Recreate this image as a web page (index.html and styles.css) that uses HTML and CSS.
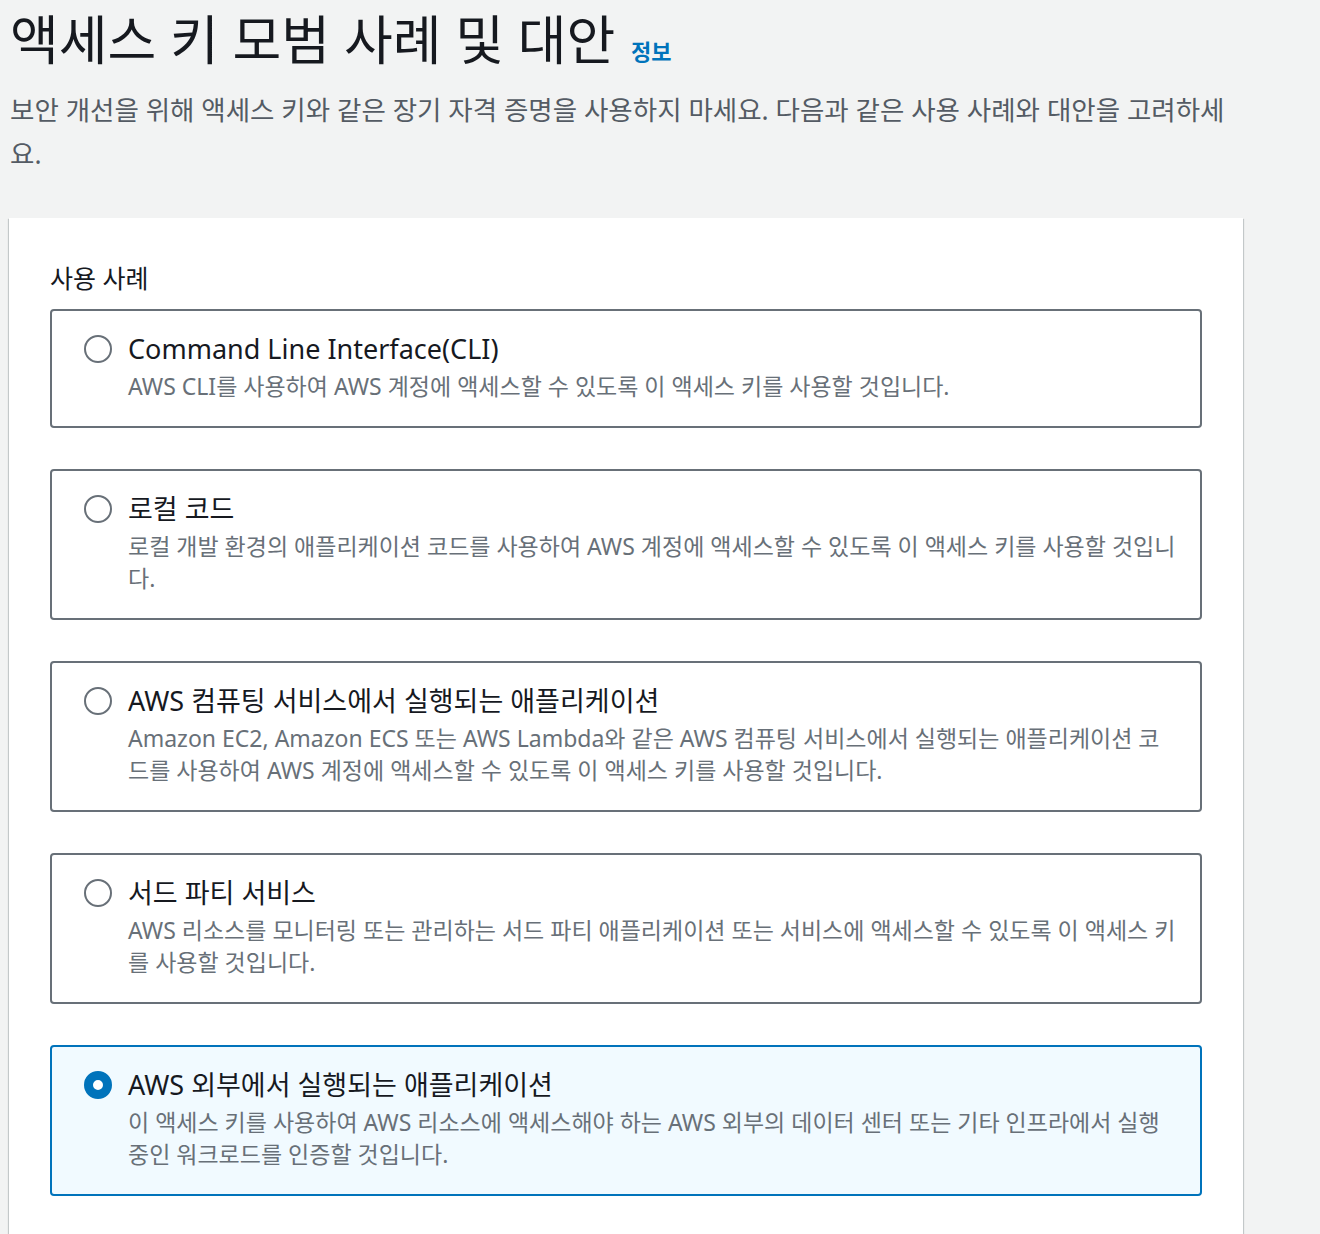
FILE: index.html
```html
<!DOCTYPE html>
<html lang="ko">
<head>
<meta charset="utf-8">
<link rel="stylesheet" href="styles.css">
</head>
<body>
<div class="page">
  <header class="header">
    <h1 class="title">액세스 키 모범 사례 및 대안 <a class="info" href="#">정보</a></h1>
    <p class="lead">보안 개선을 위해 액세스 키와 같은 장기 자격 증명을 사용하지 마세요. 다음과 같은 사용 사례와 대안을 고려하세요.</p>
  </header>
  <section class="card">
    <h2 class="card-title">사용 사례</h2>
    <div class="options">
      <label class="option">
        <span class="radio"></span>
        <span class="opt-text">
          <span class="opt-title">Command Line Interface(CLI)</span>
          <span class="opt-desc">AWS CLI를 사용하여 AWS 계정에 액세스할 수 있도록 이 액세스 키를 사용할 것입니다.</span>
        </span>
      </label>
      <label class="option">
        <span class="radio"></span>
        <span class="opt-text">
          <span class="opt-title">로컬 코드</span>
          <span class="opt-desc">로컬 개발 환경의 애플리케이션 코드를 사용하여 AWS 계정에 액세스할 수 있도록 이 액세스 키를 사용할 것입니다.</span>
        </span>
      </label>
      <label class="option">
        <span class="radio"></span>
        <span class="opt-text">
          <span class="opt-title">AWS 컴퓨팅 서비스에서 실행되는 애플리케이션</span>
          <span class="opt-desc">Amazon EC2, Amazon ECS 또는 AWS Lambda와 같은 AWS 컴퓨팅 서비스에서 실행되는 애플리케이션 코드를 사용하여 AWS 계정에 액세스할 수 있도록 이 액세스 키를 사용할 것입니다.</span>
        </span>
      </label>
      <label class="option">
        <span class="radio"></span>
        <span class="opt-text">
          <span class="opt-title">서드 파티 서비스</span>
          <span class="opt-desc">AWS 리소스를 모니터링 또는 관리하는 서드 파티 애플리케이션 또는 서비스에 액세스할 수 있도록 이 액세스 키를 사용할 것입니다.</span>
        </span>
      </label>
      <label class="option selected">
        <span class="radio"></span>
        <span class="opt-text">
          <span class="opt-title">AWS 외부에서 실행되는 애플리케이션</span>
          <span class="opt-desc">이 액세스 키를 사용하여 AWS 리소스에 액세스해야 하는 AWS 외부의 데이터 센터 또는 기타 인프라에서 실행 중인 워크로드를 인증할 것입니다.</span>
        </span>
      </label>
    </div>
  </section>
</div>
</body>
</html>
```

FILE: styles.css
```css
html, body {
  margin: 0;
  padding: 0;
}
body {
  background: #f2f3f3;
  font-family: "Noto Sans", "Noto Sans CJK KR", sans-serif;
  color: #16191f;
}
.page {
  padding: 0 0 0 9px;
  width: 1234px;
}
.header {
  padding-left: 1px;
}
.title {
  margin: 0;
  padding-top: 8px;
  font-size: 53px;
  font-weight: 400;
  line-height: 64px;
  color: #16191f;
}
.info {
  font-size: 22px;
  font-weight: 700;
  color: #0073bb;
  text-decoration: none;
  margin-left: 2px;
  vertical-align: baseline;
}
.lead {
  margin: 5px 0 0;
  font-size: 26.5px;
  line-height: 44px;
  color: #545b64;
  width: 1222px;
}
.card {
  margin-top: 42px;
  background: #fff;
  box-shadow: 0 1px 1px 0 rgba(0, 28, 36, 0.3), 1px 1px 1px 0 rgba(0, 28, 36, 0.15), -1px 1px 1px 0 rgba(0, 28, 36, 0.15);
  padding: 40px 41px 40px 41px;
}
.card-title {
  margin: 0 0 11px;
  font-size: 25px;
  font-weight: 400;
  line-height: 40px;
  color: #16191f;
}
.options {
  display: flex;
  flex-direction: column;
  gap: 41px;
}
.option {
  display: flex;
  align-items: flex-start;
  gap: 16px;
  border: 2px solid #687078;
  border-radius: 4px;
  padding: 19px 23px 24px 32px;
  background: #fff;
}
.option.selected {
  border-color: #0073bb;
  background: #f1faff;
}
.radio {
  flex: none;
  width: 24px;
  height: 24px;
  border: 2px solid #687078;
  border-radius: 50%;
  margin-top: 5px;
  box-sizing: content-box;
  background: #fff;
}
.option.selected .radio {
  border: 9px solid #0073bb;
  width: 10px;
  height: 10px;
  background: #fff;
}
.opt-text {
  display: flex;
  flex-direction: column;
  min-width: 0;
}
.opt-title {
  font-size: 27px;
  line-height: 38px;
  color: #16191f;
}
.opt-desc {
  margin-top: 2px;
  font-size: 23px;
  line-height: 32px;
  color: #687078;
}
```
